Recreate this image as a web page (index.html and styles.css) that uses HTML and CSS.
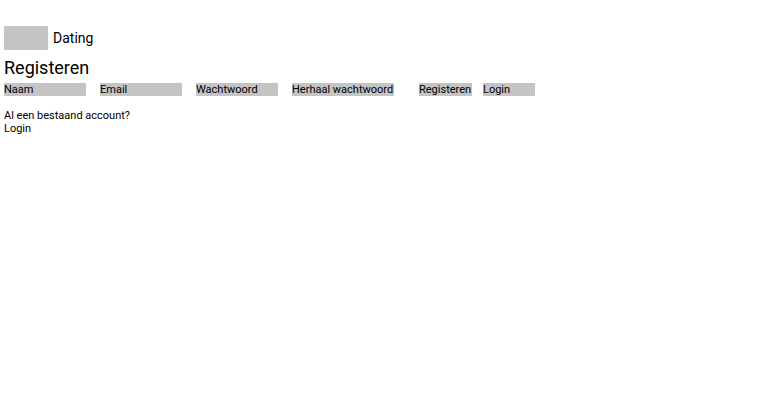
FILE: index.html
```html
<!DOCTYPE html>
<html>
<head>
<meta charset="utf-8">
<link rel="stylesheet" href="styles.css">
</head>
<body>
<header class="header">
  <div class="logo"></div>
  <span class="brand">Dating</span>
</header>
<h1 class="title">Registeren</h1>
<form class="form">
  <input class="field" type="text" value="Naam">
  <input class="field" type="text" value="Email">
  <input class="field" type="text" value="Wachtwoord">
  <input class="field field-wide" type="text" value="Herhaal wachtwoord">
  <button class="btn btn-submit" type="button">Registeren</button>
  <button class="btn btn-login" type="button">Login</button>
</form>
<div class="account">
  <div>Al een bestaand account?</div>
  <div>Login</div>
</div>
</body>
</html>
```
FILE: styles.css
```css
html, body {
  margin: 0;
  padding: 0;
  background: #fff;
}
body {
  font-family: Roboto, "Liberation Sans", sans-serif;
  color: #000;
  padding: 0 4px;
}
.header {
  display: flex;
  align-items: center;
  gap: 5px;
  padding-top: 26px;
}
.logo {
  width: 44px;
  height: 24px;
  background: #c4c4c4;
}
.brand {
  font-size: 14px;
}
.title {
  font-size: 18px;
  font-weight: 400;
  margin: 7px 0 0;
  line-height: 22px;
}
.form {
  display: flex;
  align-items: center;
  margin-top: 4px;
}
.field, .btn {
  font-family: Roboto, "Liberation Sans", sans-serif;
  font-size: 11px;
  color: #000;
  background: #c4c4c4;
  border: 0;
  padding: 0;
  margin: 0;
  height: 13px;
  line-height: 13px;
  outline: none;
}
.field {
  width: 82px;
  margin-right: 14px;
}
.field-wide {
  width: 102px;
  margin-right: 25px;
}
.btn {
  width: 53px;
  text-align: left;
}
.btn-submit {
  margin-right: 11px;
}
.btn-login {
  width: 52px;
}
.account {
  margin-top: 13px;
  font-size: 11px;
  line-height: 13px;
}
```
